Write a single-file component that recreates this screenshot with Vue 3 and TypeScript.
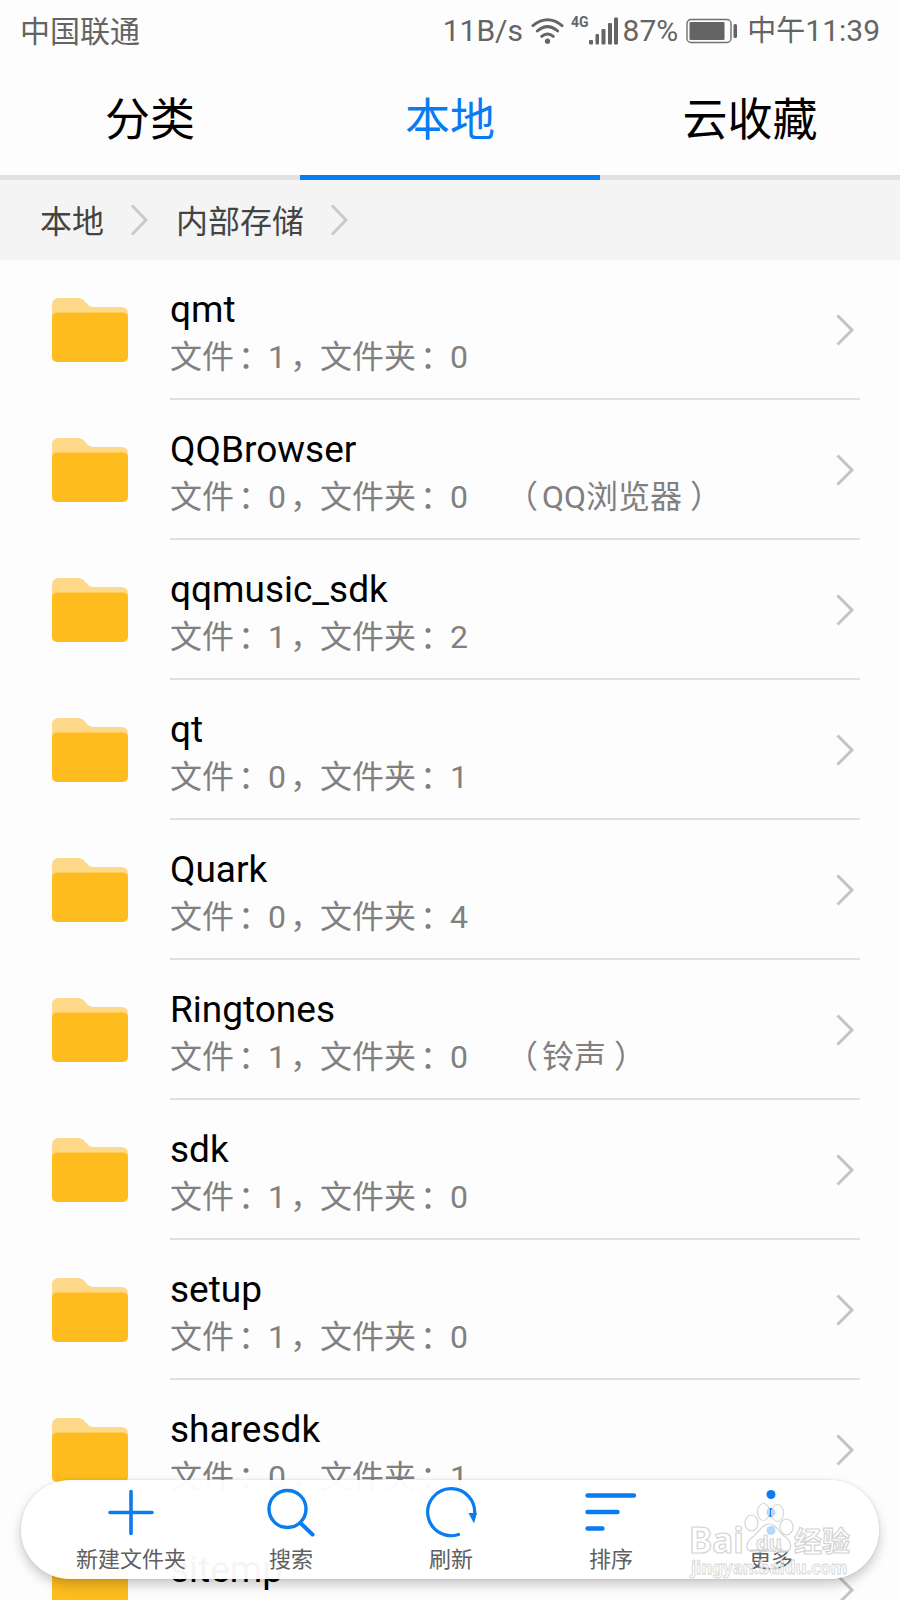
<script setup lang="ts">
import { ref } from 'vue'

interface Folder {
  name: string
  files: number
  folders: number
  alias?: string
}

const tabs: string[] = ['分类', '本地', '云收藏']
const activeTab = ref<string>('本地')
const crumbs: string[] = ['本地', '内部存储']

const folders: Folder[] = [
  { name: 'qmt', files: 1, folders: 0 },
  { name: 'QQBrowser', files: 0, folders: 0, alias: 'QQ浏览器' },
  { name: 'qqmusic_sdk', files: 1, folders: 2 },
  { name: 'qt', files: 0, folders: 1 },
  { name: 'Quark', files: 0, folders: 4 },
  { name: 'Ringtones', files: 1, folders: 0, alias: '铃声' },
  { name: 'sdk', files: 1, folders: 0 },
  { name: 'setup', files: 1, folders: 0 },
  { name: 'sharesdk', files: 0, folders: 1 },
  { name: 'sitemp', files: 0, folders: 1 },
]
</script>

<template>
  <div class="phone">
    <header class="status">
      <span class="carrier">中国联通</span>
      <span class="speed">11B/s</span>
      <svg class="wifi" width="33" height="28" viewBox="0 0 34 28" aria-hidden="true">
        <g fill="none" stroke="#646464" stroke-width="3" stroke-linecap="round">
          <path d="M2 8.500Q17 -3.500 32 8.500" />
          <path d="M6.500 14Q17 5 27.500 14" />
          <path d="M11 19.500Q17 14.500 23 19.500" />
        </g>
        <circle cx="17" cy="24.500" r="2.700" fill="#646464" />
      </svg>
      <span class="net">4G</span>
      <svg class="signal" width="30" height="28" viewBox="0 0 30 28" aria-hidden="true">
        <g fill="#646464">
          <rect x="0" y="23" width="4" height="4.500" rx="1" />
          <rect x="6.500" y="17" width="3.500" height="10.500" rx="1" />
          <rect x="12.500" y="12" width="4" height="15.500" rx="1" />
          <rect x="19" y="6" width="4" height="21.500" rx="1" />
          <rect x="25" y="0.500" width="4" height="27" rx="1" />
        </g>
      </svg>
      <span class="percent">87%</span>
      <svg class="battery" width="52" height="26" viewBox="0 0 52 26" aria-hidden="true">
        <rect x="1" y="1.500" width="44" height="23" rx="4" fill="none" stroke="#707070" stroke-width="1.400" />
        <rect x="3.500" y="4" width="35" height="18" rx="1" fill="#646464" />
        <rect x="47.500" y="6" width="3.500" height="14" rx="1.500" fill="#646464" />
      </svg>
      <span class="clock"><span class="period">中午</span>11:39</span>
    </header>

    <nav class="tabs">
      <button
        v-for="tab in tabs"
        :key="tab"
        type="button"
        :class="['tab', { active: tab === activeTab }]"
        @click="activeTab = tab"
      >{{ tab }}</button>
    </nav>

    <nav class="crumbs">
      <template v-for="crumb in crumbs" :key="crumb">
        <a class="crumb" href="#">{{ crumb }}</a>
        <svg class="crumb-arrow" width="18" height="34" viewBox="0 0 18 34" aria-hidden="true">
          <path d="M2 2.500L16 17L2 31.500" fill="none" stroke="#c9c9c9" stroke-width="3" />
        </svg>
      </template>
    </nav>

    <main class="content">
      <ul class="list">
        <li v-for="folder in folders" :key="folder.name">
          <a class="row" href="#">
            <svg class="folder" width="76" height="64" viewBox="0 0 76 64" aria-hidden="true">
              <path d="M0 7Q0 0 7 0H26Q30 0 33 3.500L36 7Q38 9 42 9H69Q76 9 76 16V30H0Z" fill="#ffd98a" />
              <rect x="0" y="14.500" width="76" height="49.500" rx="5" fill="#febc1f" />
            </svg>
            <span class="info">
              <span class="name">{{ folder.name }}</span>
              <span class="meta">
                <span>文件<span class="mark">：</span>{{ folder.files }}<span class="mark">，</span>文件夹<span class="mark">：</span>{{ folder.folders }}</span>
                <span v-if="folder.alias">（<span class="alias">{{ folder.alias }}</span>）</span>
              </span>
            </span>
            <svg class="arrow" width="20" height="34" viewBox="0 0 20 34" aria-hidden="true">
              <path d="M2.500 2.500L17 17L2.500 31.500" fill="none" stroke="#c4c4c4" stroke-width="3" />
            </svg>
          </a>
        </li>
      </ul>
    </main>

    <footer class="toolbar">
      <button class="tool" type="button">
        <svg width="52" height="52" viewBox="0 0 52 52" aria-hidden="true">
          <path d="M26 5.500V47.500M5 26.500H47" fill="none" stroke="#0a7cf0" stroke-width="3.600" stroke-linecap="round" />
        </svg>
        <span>新建文件夹</span>
      </button>
      <button class="tool" type="button">
        <svg width="52" height="52" viewBox="0 0 52 52" aria-hidden="true">
          <g fill="none" stroke="#0a7cf0" stroke-width="3.400" stroke-linecap="round">
            <circle cx="22.500" cy="23" r="18.500" />
            <path d="M35.500 37L47.500 48.500" stroke-width="4" />
          </g>
        </svg>
        <span>搜索</span>
      </button>
      <button class="tool" type="button">
        <svg width="52" height="52" viewBox="0 0 52 52" aria-hidden="true">
          <path d="M33.500 48.500A23.500 23.500 0 1 1 49.500 29" fill="none" stroke="#0a7cf0" stroke-width="3.200" stroke-linecap="round" />
          <path d="M43.500 27H52L49 37.500Z" fill="#0a7cf0" />
        </svg>
        <span>刷新</span>
      </button>
      <button class="tool" type="button">
        <svg width="52" height="52" viewBox="0 0 52 52" aria-hidden="true">
          <path d="M2.500 9.500H49M2.500 26H32.500M2.500 42.500H17.500" fill="none" stroke="#0a7cf0" stroke-width="4.400" stroke-linecap="round" />
        </svg>
        <span>排序</span>
      </button>
      <button class="tool" type="button">
        <svg width="52" height="52" viewBox="0 0 52 52" aria-hidden="true">
          <g fill="#0a7cf0">
            <circle cx="26" cy="8.500" r="4.500" />
            <circle cx="26" cy="26.500" r="4.500" />
            <circle cx="26" cy="44.500" r="4.500" />
          </g>
        </svg>
        <span>更多</span>
      </button>

      <svg class="brand" width="168" height="80" viewBox="0 0 168 80" aria-hidden="true">
        <g fill="#ffffff" fill-opacity="0.700" stroke="#d4d4d4" stroke-width="1.200">
          <ellipse cx="64.500" cy="21" rx="6.500" ry="8" />
          <ellipse cx="76.500" cy="10" rx="6" ry="8.500" />
          <ellipse cx="90.500" cy="11" rx="6" ry="8.500" />
          <ellipse cx="99.500" cy="25" rx="6.500" ry="8" />
          <path d="M82 22C75 22 73 29 67 34C58 40 57 49 67 50C73 51 77 49 82 49C87 49 91 51 97 50C106 49 106 40 97 34C91 29 89 22 82 22Z" />
          <g class="brand-text">
            <text x="2" y="51" font-size="35">Bai</text>
            <text x="69" y="48" font-size="20">du</text>
            <text x="107" y="50" font-size="28">经验</text>
            <text x="4" y="72" font-size="17" stroke-width="0.800">jingyan.baidu.com</text>
          </g>
        </g>
      </svg>
    </footer>
  </div>
</template>

<style>
body {
  margin: 0;
}
</style>

<style scoped>
.phone {
  position: relative;
  display: flex;
  flex-direction: column;
  height: 100vh;
  overflow: hidden;
  background: #fdfdfd;
  color: #000;
  font-family: Roboto, "Noto Sans CJK SC", sans-serif;
}

button {
  padding: 0;
  border: 0;
  background: none;
  font: inherit;
  cursor: pointer;
}

a {
  color: inherit;
  text-decoration: none;
}

svg {
  display: block;
  flex: none;
}

.status {
  flex: none;
  display: flex;
  align-items: center;
  height: 62px;
  padding: 0 20px;
  color: #646464;
  font-size: 30px;
  line-height: 36px;
  white-space: nowrap;
}

.carrier {
  flex: 1;
  padding-top: 2px;
}

.period {
  font-size: 29px;
}

.wifi {
  margin-left: 8px;
}

.net {
  align-self: flex-start;
  margin: 14px 0 0 7px;
  font-size: 14px;
  font-weight: 700;
  line-height: 16px;
}

.percent {
  margin: 0 8px 0 4px;
}

.clock {
  margin-left: 9px;
}

.tabs {
  flex: none;
  display: flex;
  height: 118px;
}

.tab {
  flex: 1;
  padding-top: 4px;
  border-bottom: 5px solid #e1e1e1;
  color: #000;
  font-size: 45px;
  line-height: 64px;
}

.tab.active {
  border-color: #087cf5;
  color: #087cf5;
}

.crumbs {
  flex: none;
  display: flex;
  align-items: center;
  height: 80px;
  padding: 0 40px;
  background: #f4f4f4;
  color: #444;
  font-size: 32px;
  line-height: 44px;
}

.crumb {
  padding-top: 4px;
}

.crumb-arrow {
  margin: 0 28px 0 26px;
}

.content {
  flex: 1;
  min-height: 0;
  overflow: hidden;
}

.list {
  margin: 0;
  padding: 0;
  list-style: none;
}

.row {
  position: relative;
  display: flex;
  align-items: center;
  height: 140px;
  padding: 0 45px 0 52px;
}

.folder {
  margin-right: 42px;
}

.info {
  flex: 1;
  align-self: stretch;
  display: flex;
  flex-direction: column;
  padding-top: 27px;
}

.row::after {
  content: "";
  position: absolute;
  right: 40px;
  bottom: 0;
  left: 170px;
  height: 2px;
  background: #e0e0e0;
}

.name {
  font-size: 37px;
  line-height: 46px;
}

.meta {
  display: flex;
  gap: 38px;
  color: #808080;
  font-size: 32px;
  line-height: 48px;
  white-space: nowrap;
}

.mark {
  margin: 0 -2px 0 4px;
}

.alias {
  margin: 0 8px 0 4px;
}

.toolbar {
  position: absolute;
  right: 21px;
  bottom: 21px;
  left: 21px;
  display: flex;
  justify-content: center;
  box-sizing: border-box;
  height: 99px;
  padding: 0 28px 0 30px;
  border-radius: 50px;
  background: rgba(255, 255, 255, 0.96);
  box-shadow: 0 6px 12px rgba(0, 0, 0, 0.2), 0 0 3px rgba(0, 0, 0, 0.12);
}

.tool {
  flex: 1;
  display: flex;
  flex-direction: column;
  align-items: center;
  gap: 4px;
  padding-top: 6px;
  color: #606060;
  font-size: 22px;
  line-height: 36px;
}

.brand {
  position: absolute;
  right: 24px;
  bottom: -3px;
  pointer-events: none;
}

.brand-text {
  font-family: "Noto Sans", "Noto Sans CJK SC", sans-serif;
  font-weight: 700;
}
</style>
